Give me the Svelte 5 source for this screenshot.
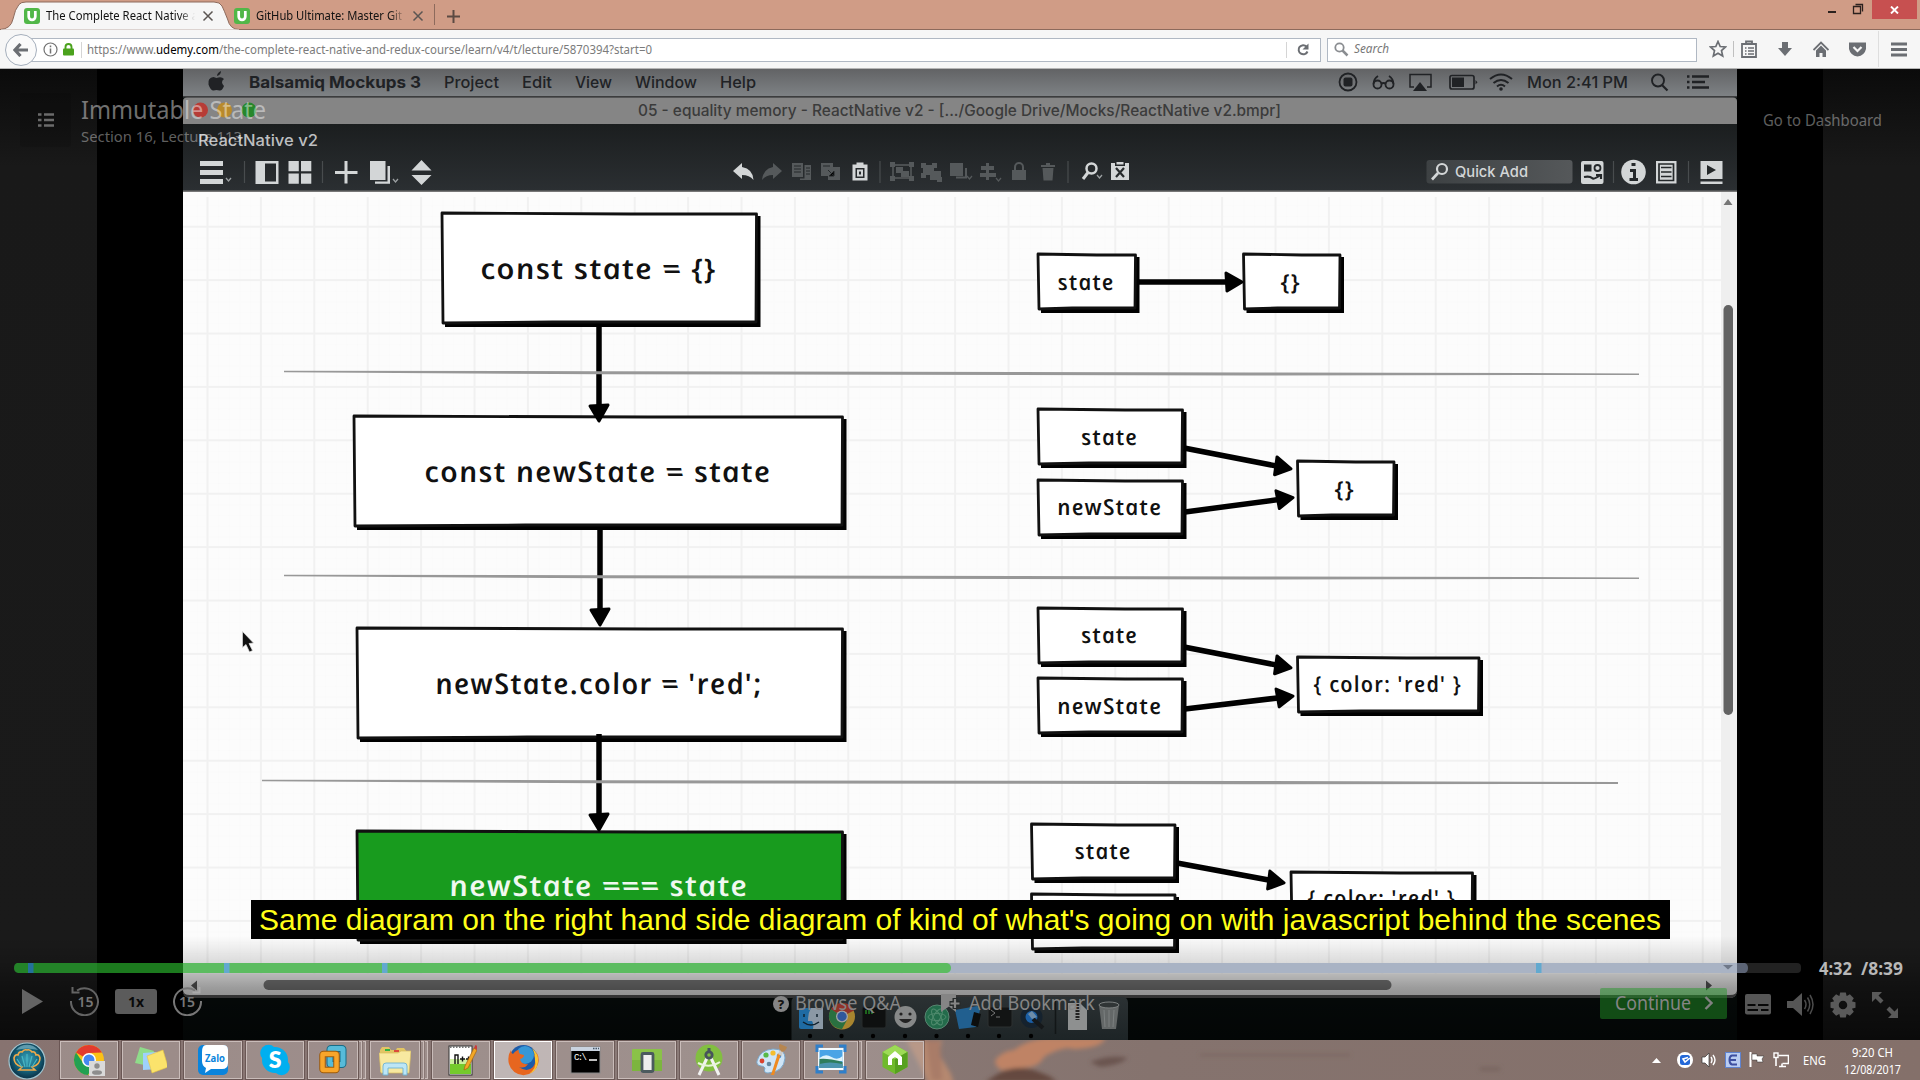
<script>
  const boxes = [
    { x: 442, y: 213, w: 315, h: 110, t: 'const state = {}', tx: 482, tw: 236, by: 279, big: true },
    { x: 354, y: 416, w: 489, h: 110, t: 'const newState = state', tx: 426, tw: 347, by: 481.5, big: true },
    { x: 357, y: 628, w: 486, h: 110, t: "newState.color = 'red';", tx: 437, tw: 327, by: 693.5, big: true },
    { x: 357, y: 831, w: 486, h: 109, t: 'newState === state', tx: 451, tw: 299, by: 896, big: true, green: true },
    { x: 1038, y: 254, w: 98, h: 55, t: 'state', tx: 1059, tw: 57, by: 289.5 },
    { x: 1243.5, y: 254, w: 97, h: 55, t: '{}', tx: 1282, tw: 20, by: 289.5 },
    { x: 1038, y: 409, w: 145, h: 55, t: 'state', tx: 1082.5, tw: 57, by: 445 },
    { x: 1038, y: 480, w: 145, h: 55, t: 'newState', tx: 1058.5, tw: 105, by: 515 },
    { x: 1297.5, y: 461, w: 97, h: 55, t: '{}', tx: 1336, tw: 20, by: 497 },
    { x: 1038, y: 608, w: 145, h: 55, t: 'state', tx: 1082.5, tw: 57, by: 643.3 },
    { x: 1038, y: 678, w: 145, h: 55, t: 'newState', tx: 1058.5, tw: 105, by: 714 },
    { x: 1297.5, y: 657, w: 182, h: 55, t: "{ color: 'red' }", tx: 1315, tw: 148, by: 691.5 },
    { x: 1031.5, y: 824, w: 144, h: 55, t: 'state', tx: 1076, tw: 57, by: 859.3 },
    { x: 1031.5, y: 894, w: 144, h: 55, t: '', tx: 1052, tw: 105, by: 930 },
    { x: 1291, y: 872, w: 182, h: 55, t: "{ color: 'red' }", tx: 1309, tw: 148, by: 906 }
  ];
  const arrows = [
    [599, 326, 599, 422], [600, 529, 600, 626], [599, 734, 599, 831],
    [1138, 282, 1243, 282],
    [1184, 448, 1292, 469], [1185, 512, 1294, 497.5],
    [1184, 647, 1292, 668], [1185, 709, 1294, 696],
    [1177, 863, 1285, 883]
  ];
  const heads = arrows.map(([x1, y1, x2, y2]) => ({
    x1, y1, x2, y2,
    a: (Math.atan2(y2 - y1, x2 - x1) * 180) / Math.PI,
    len: Math.hypot(x2 - x1, y2 - y1)
  }));
  const menus = [
    { t: 'Balsamiq Mockups 3', x: 249, w: 172, b: true },
    { t: 'Project', x: 444, w: 55 }, { t: 'Edit', x: 522, w: 30 },
    { t: 'View', x: 575, w: 37 }, { t: 'Window', x: 635, w: 62 },
    { t: 'Help', x: 720, w: 36 }, { t: 'Mon 2:41 PM', x: 1527, w: 101 }
  ];
  const dividers = [
    'M284 370.8 L600 371.2 L1250 372.4 L1639 373.4 L1639 375 L1250 375.4 L600 374.2 L284 372.3Z',
    'M284 574.8 L600 575.2 L1250 576.4 L1639 577.4 L1639 579 L1250 579.4 L600 578.2 L284 576.3Z',
    'M262 779.8 L600 780.2 L1250 781 L1618 782 L1618 784 L1250 784.2 L600 783.2 L262 781.3Z'
  ];
  const markers = [28, 224, 382, 1536];
  const tasks = [
    { k: 'chrome' }, { k: 'notes' }, { k: 'zalo' }, { k: 'skype' },
    { k: 'vm', stack: 2 }, { k: 'folder', stack: 2 }, { k: 'npp' },
    { k: 'firefox', active: true }, { k: 'cmd' }, { k: 'phone' },
    { k: 'studio' }, { k: 'paint' }, { k: 'photo', stack: 1 }, { k: 'nox' }
  ];
  const dockDots = [810, 841.5, 873, 905, 936.5, 968, 999, 1031];
</script>

{#snippet fit(text, w, size, cls)}
  <svg class="fit {cls}" width={w} height={Math.ceil(size * 1.4)}>
    <text y={size} font-size={size} textLength={w} lengthAdjust="spacingAndGlyphs">{text}</text>
  </svg>
{/snippet}

{#snippet favicon()}
  <svg class="favicon" width="16" height="16"><rect width="16" height="16" rx="3" fill="#51b748" /><path d="M4.700 3v5.600a3.300 3.300 0 0 0 6.600 0V3" fill="none" stroke="#fff" stroke-width="2.700" /></svg>
{/snippet}

{#snippet cross()}
  <svg class="cross" width="12" height="12"><path d="M1.500 1.500l9 9M10.500 1.500l-9 9" stroke="#5b5552" stroke-width="1.500" /></svg>
{/snippet}

{#snippet taskIcon(k)}
  <svg width="32" height="32" viewBox="0 0 32 32">
    {#if k === 'chrome'}
      <circle cx="16" cy="16" r="15" fill="#fbc116" />
      <path d="M16 16L3 8.500A15 15 0 0 1 29 8.500L16 9Z" fill="#e33b2e" />
      <path d="M3 8.500A15 15 0 0 0 15 31L21 20L16 16L9.800 18.500Z" fill="#22a052" />
      <circle cx="16" cy="16" r="7" fill="#fff" /><circle cx="16" cy="16" r="5.500" fill="#4688f1" />
      <rect x="16" y="17" width="16" height="15" fill="#d9d9d9" /><circle cx="24" cy="22" r="2.700" fill="#8d8d8d" /><ellipse cx="24" cy="28.500" rx="5" ry="2.300" fill="#8d8d8d" />
    {:else if k === 'notes'}
      <path d="M5 3l14 4-5 15L0 19Z" fill="#8fdc8a" /><path d="M8 9l14-1 2 17-16 1Z" fill="#9fd1fb" /><path d="M12 12l16-6 5 17-16 6Z" fill="#fbe36c" stroke="#e5c541" stroke-width=".6" />
    {:else if k === 'zalo'}
      <rect x="1" y="1" width="30" height="30" rx="5" fill="#0a84dc" /><path d="M9 1h17q5 0 5 5v13q0 6-6 6H14l-6 4 1-5q-4-2-4-7V8q0-7 4-7Z" fill="#fff" />
      <text x="8" y="17.500" font-size="10" font-weight="700" fill="#0a84dc" textLength="20" lengthAdjust="spacingAndGlyphs" font-family="Open Sans, sans-serif">Zalo</text>
    {:else if k === 'skype'}
      <circle cx="9.500" cy="9" r="8.300" fill="#00aff0" /><circle cx="22.500" cy="23" r="8.300" fill="#00aff0" /><circle cx="16" cy="16" r="13" fill="#00aff0" />
      <text x="16" y="24" font-size="23" font-weight="800" fill="#fff" text-anchor="middle" font-family="Lato, sans-serif">S</text>
    {:else if k === 'vm'}
      <rect x="13" y="4.500" width="13" height="16" rx="1" fill="none" stroke="#176c87" stroke-width="7" /><rect x="13" y="4.500" width="13" height="16" rx="1" fill="none" stroke="#57bbd9" stroke-width="5" />
      <rect x="5.500" y="10" width="14" height="16" rx="1" fill="none" stroke="#9d5b0c" stroke-width="6.500" /><rect x="5.500" y="10" width="14" height="16" rx="1" fill="none" stroke="#f8a52a" stroke-width="4.500" />
    {:else if k === 'folder'}
      <path d="M1 6l2-3h7l2 3h5l1-2h7l3 4v20H1Z" fill="#e2c564" /><path d="M6 5h5v2H6Z" fill="#2fb344" /><path d="M15 6h5v2h-5Z" fill="#db4b3c" /><path d="M20 8h6v2h-6Z" fill="#3c8fe0" />
      <path d="M0 9h19l3-2h10l-2 22H2Z" fill="#f8e9a0" stroke="#d9bd5e" stroke-width=".7" /><path d="M4 31v-9q0-3 3-3h18q3 0 3 3v9h-4v-7H9v7Z" fill="#bde6f6" stroke="#6db2d3" stroke-width=".9" />
    {:else if k === 'npp'}
      <rect x="4" y="2" width="23" height="29" fill="#fff" stroke="#333" stroke-width="1" /><path d="M5 19h21v11H5Z" fill="#74ca2c" /><path d="M5 15h21v5H5Z" fill="#cdf09f" />
      <path d="M5 3h21" stroke="#777" stroke-width="2" stroke-dasharray="1.500 1.500" />
      <path d="M10 20v-9h3v9M15 15h5M17.500 12.500v5M21 15h5M23.500 12.500v5" stroke="#111" fill="none" stroke-width="1.400" /><path d="M19 26l1-4 9-18 3 2-9 18Z" fill="#f2a826" stroke="#a76310" stroke-width=".7" /><path d="M29 4l1.500-3 3 1.500L32 6Z" fill="#c93c3c" />
    {:else if k === 'firefox'}
      <circle cx="16.500" cy="15" r="14" fill="#1e5ba8" /><circle cx="18" cy="11" r="9" fill="#3697d6" />
      <path d="M29 7q4 7 2 13a15 15 0 0 1-29 0Q0 12 4 6q0 3 2 4 3-4 6-4-1 2 1 4l4 1q0 3-4 4 1 6 8 5-3 5-9 3 8 6 14 0 4-5 1-12 4 2 2-4Z" fill="#e7661f" /><path d="M25 4q7 6 6 14-1 9-9 12 8-6 6-14 0-7-3-12Z" fill="#fcc430" />
    {:else if k === 'cmd'}
      <rect x="2" y="3" width="29" height="26" fill="#000" stroke="#888" stroke-width="1" /><rect x="2" y="3" width="29" height="4" fill="#c9d3e0" /><path d="M24 4.500h6" stroke="#456" stroke-width="1.500" stroke-dasharray="1.500 1" />
      <text x="5" y="16" font-size="9" fill="#fff" font-family="Liberation Mono, monospace" textLength="13">C:\</text><path d="M20 16h8" stroke="#fff" stroke-width="1.500" />
    {:else if k === 'phone'}
      <rect x="1" y="5" width="30" height="22" rx="1" fill="#8ac248" /><path d="M1 16h30v11H1Z" fill="#7cb53f" /><rect x="11" y="9.500" width="11" height="18" rx="1" fill="#eee" stroke="#4b5a5e" stroke-width="2.800" />
    {:else if k === 'studio'}
      <circle cx="16" cy="14" r="13.500" fill="#82bf40" /><path d="M14.500 13L6 31M17.500 13L26 31" stroke="#f2f2f2" stroke-width="3" /><path d="M5 19q11 6 22-1" stroke="#e8f5da" stroke-width="2" fill="none" /><circle cx="16" cy="11" r="3.200" fill="none" stroke="#47555b" stroke-width="2.800" /><path d="M16 4v4" stroke="#47555b" stroke-width="3" />
    {:else if k === 'paint'}
      <path d="M2 17Q5 6 18 5q12 0 12 9-1 14-17 15-5 0-3-5-1-2-4-2-5-1-4-5Z" fill="#cfe5f7" stroke="#7ba8cb" stroke-width="1" /><circle cx="11" cy="11" r="2.600" fill="#56b947" /><circle cx="18" cy="9" r="2.600" fill="#f5bd2e" /><circle cx="7" cy="17" r="2.400" fill="#d9432f" /><circle cx="24" cy="12" r="2.300" fill="#418cd7" /><circle cx="14" cy="20" r="2.300" fill="#6487a0" />
      <path d="M16 31l7-22 3 1-7 21Z" fill="#ef8b22" /><path d="M23 10l2-4 3 1-1 5Z" fill="#ccc" /><path d="M25 6q-2-5 0-6l7 3q-1 4-5 5Z" fill="#b78650" />
    {:else if k === 'photo'}
      <rect x="3" y="4" width="26" height="22" fill="#f4fafd" /><rect x="4.500" y="6" width="23" height="18" fill="#4aa4e6" /><path d="M4.500 14q6-5 12-1t11-1v5h-23Z" fill="#dff3fb" /><path d="M4.500 15q8-1 23 3v6h-23Z" fill="#2f7d5c" /><path d="M4.500 20q10-3 23 0v4h-23Z" fill="#4c95ae" />
      <path d="M2 8V2h6M24 2h6v6M30 22v6h-6M8 28H2v-6" fill="none" stroke="#2f7fca" stroke-width="3" />
    {:else}
      <path d="M16 1l12.500 7v15L16 30 3.500 23V8Z" fill="#6fba2c" /><path d="M16 1l12.500 7L16 15 3.500 8Z" fill="#9ddb56" /><path d="M16 15l12.500-7v15L16 30Z" fill="#56a11f" /><path d="M9 21v-8l7-6 7 6v8h-4v-6l-3-2-3 2v6Z" fill="#fff" />
    {/if}
  </svg>
{/snippet}

<div class="screen">
  <header class="tabs">
    <div class="tab active">
      <svg class="shape" width="241" height="30" viewBox="0 0 241 30"><path d="M0 29.500Q11 29 13 19T19 4.500Q21 2 26 2H214Q220 2 222 6T227.500 19Q230 29.500 239 29.500" fill="#f6f6f6" stroke="#8d6a5c" stroke-width="1" /><path d="M1 30H239" stroke="#f6f6f6" stroke-width="1" /></svg>
      {@render favicon()}
      <span class="tab-text">{@render fit('The Complete React Native a', 152, 12, 'dark')}</span>
      {@render cross()}
    </div>
    <div class="tab second">
      {@render favicon()}
      <span class="tab-text">{@render fit('GitHub Ultimate: Master Git', 146, 12, 'dark')}</span>
      {@render cross()}
    </div>
    <svg class="plus" width="13" height="13"><path d="M6.500 0v13M0 6.500h13" stroke="#5c4a43" stroke-width="2" /></svg>
    <div class="win">
      <svg width="44" height="19"><path d="M0 12h8" stroke="#2b211e" stroke-width="2" /><path d="M25.500 6.500h7v7h-7zM25 6.500h8M27.500 4.500h7v7" fill="none" stroke="#2b211e" stroke-width="1.300" /></svg>
      <span class="close"><svg width="9" height="8"><path d="M1 .5l7 7M8 .5l-7 7" stroke="#fff" stroke-width="1.900" /></svg></span>
    </div>
  </header>

  <nav class="nav">
    <div class="url">
      <span class="back"><svg width="16" height="14"><path d="M7.500 1L2 7l5.500 6M2.500 7H15" fill="none" stroke="#6b6e73" stroke-width="3.200" /></svg></span>
      <svg class="info" width="15" height="15"><circle cx="7.500" cy="7.500" r="6.500" fill="none" stroke="#727272" stroke-width="1.200" /><path d="M7.500 6.500v5M7.500 3.500v1.700" stroke="#727272" stroke-width="1.500" /></svg>
      <svg class="lock" width="11" height="13"><rect y="5.500" width="11" height="7" rx="1" fill="#4ba21d" /><path d="M2.500 6V4a3 3 0 0 1 6 0v2" fill="none" stroke="#4ba21d" stroke-width="1.900" /></svg>
      <i class="bar"></i>
      <svg class="fit address" width="567" height="17"><text y="12.500" font-size="12" textLength="565" lengthAdjust="spacingAndGlyphs">https://www.<tspan class="host">udemy.com</tspan>/the-complete-react-native-and-redux-course/learn/v4/t/lecture/5870394?start=0</text></svg>
      <i class="bar end"></i>
      <svg class="reload" width="14" height="14"><path d="M11.500 8.500A4.600 4.600 0 1 1 10.500 3.500" fill="none" stroke="#6b6e73" stroke-width="2" /><path d="M12.500 0.500v6h-6z" fill="#6b6e73" /></svg>
    </div>
    <div class="search">
      <svg width="15" height="15"><circle cx="5.500" cy="5.500" r="4.200" fill="none" stroke="#8a8d91" stroke-width="1.800" /><path d="M8.500 8.500l5 5" stroke="#8a8d91" stroke-width="2.500" /></svg>
      {@render fit('Search', 35, 12, 'italic')}
    </div>
    <div class="tools">
      <svg width="18" height="18" viewBox="0 0 18 18"><path d="M9 1.500l2.200 5 5.300.5-4 3.600 1.200 5.400L9 13.200 4.300 16l1.200-5.400-4-3.600 5.300-.5Z" fill="none" stroke="#6b6e73" stroke-width="1.700" /></svg>
      <i class="bar"></i>
      <svg width="16" height="18" viewBox="0 0 16 18"><path d="M1 4h14v13H1zM5 4V1.500h6V4" fill="none" stroke="#6b6e73" stroke-width="1.800" /><path d="M4 8h1.500M7 8h6M4 11h1.500M7 11h6M4 14h1.500M7 14h6" stroke="#6b6e73" stroke-width="1.400" /></svg>
      <svg width="14" height="16" viewBox="0 0 14 16"><path d="M4 1h6v6h4l-7 8-7-8h4Z" fill="#6b6e73" /></svg>
      <svg width="16" height="16" viewBox="0 0 16 16"><path d="M.5 9L8 1.500 15.500 9" fill="none" stroke="#6b6e73" stroke-width="1.800" /><path d="M3 9.500l5-5 5 5V16H9.500v-4h-3v4H3Z" fill="#6b6e73" /></svg>
      <svg width="17" height="16" viewBox="0 0 17 16"><path d="M0 1.500h17V8Q15.500 14.500 8.500 15.500 1.500 14.500 0 8Z" fill="#6b6e73" /><path d="M4.500 6l4 4 4-4" fill="none" stroke="#f6f6f6" stroke-width="2.200" /></svg>
      <i class="bar tall"></i>
      <svg width="16" height="15"><path d="M0 2h16M0 7.500h16M0 13h16" stroke="#6b6e73" stroke-width="3" /></svg>
    </div>
  </nav>

  <main class="player">
    <svg class="video" width="1920" height="971" viewBox="0 69 1920 971">
      <defs>
        <linearGradient id="side" x2="0" y2="1"><stop offset="0" stop-color="#0b0b0b" /><stop offset=".1" stop-color="#191919" /><stop offset=".9" stop-color="#1a1a1a" /><stop offset="1" stop-color="#1a1a1a" /></linearGradient>
        <linearGradient id="menu" x2="0" y2="1"><stop offset="0" stop-color="#626365" /><stop offset="1" stop-color="#7f8386" /></linearGradient>
        <linearGradient id="tool" x2="0" y2="1"><stop offset="0" stop-color="#1b1e1f" /><stop offset="1" stop-color="#2b2f32" /></linearGradient>
        <linearGradient id="shade" x2="0" y2="1"><stop offset="0" stop-color="#000" stop-opacity="0" /><stop offset=".25" stop-color="#000" stop-opacity=".13" /><stop offset=".5" stop-color="#000" stop-opacity=".35" /><stop offset="1" stop-color="#000" stop-opacity=".62" /></linearGradient>
        <linearGradient id="dock" x2="0" y2="1"><stop offset="0" stop-color="#2b3133" /><stop offset="1" stop-color="#1d2426" /></linearGradient>
        <linearGradient id="field" x2="1" y2="0"><stop offset="0" stop-color="#3d4143" /><stop offset="1" stop-color="#55585a" /></linearGradient>
        <pattern id="minor" x="207.500" y="226.700" width="10.680" height="10.680" patternUnits="userSpaceOnUse"><path d="M0 0H10.680M0 0V10.680" stroke="#f9f9f9" /></pattern>
        <pattern id="major" x="206.500" y="225.700" width="53.400" height="53.400" patternUnits="userSpaceOnUse"><path d="M0 1H53.400M1 0V53.400" stroke="#f1f1f1" stroke-width="2" /></pattern>
      </defs>
      <rect y="69" width="1920" height="971" fill="#000" />
      <rect y="69" width="97" height="971" fill="url(#side)" /><rect x="1823" y="69" width="97" height="971" fill="url(#side)" />
      <rect x="183" y="69" width="1554" height="971" fill="#080f0e" />

      <!-- system menu bar -->
      <rect x="183" y="69" width="1554" height="28" fill="url(#menu)" />
      <rect x="183" y="96" width="1554" height="1.500" fill="#3c3d3e" />
      <g fill="#202225" font-family="Inter, sans-serif" font-size="16">
        <path d="M217 76q0-3 4-5 0 4-4 5ZM216.500 78q5-2 7.500 1-4 3 0 7-2 5-4.500 4.500-3-1-6 0-3 0-5-6-1-7 5-7.500Z" />
        {#each menus as m}
          <text x={m.x} y="88" font-weight={m.b ? 700 : 500} textLength={m.w} lengthAdjust="spacingAndGlyphs">{m.t}</text>
        {/each}
        <circle cx="1348" cy="82" r="8.500" fill="none" stroke="#202225" stroke-width="1.800" /><rect x="1343.500" y="77.500" width="9" height="9" rx="2" />
        <path d="M1373.500 84q0-5 4.500-8M1393.500 84q0-5-4.500-8M1381 84q2.500-2 5 0" stroke="#202225" stroke-width="1.700" fill="none" />
        <circle cx="1377.500" cy="84.500" r="4" fill="none" stroke="#202225" stroke-width="1.800" /><circle cx="1389.500" cy="84.500" r="4" fill="none" stroke="#202225" stroke-width="1.800" />
        <path d="M1414 87h-4V74.500h21V87h-4" fill="none" stroke="#202225" stroke-width="1.500" /><path d="M1420 82l7 9h-14Z" />
        <rect x="1450" y="75.500" width="24" height="13.500" rx="2" fill="none" stroke="#202225" stroke-width="1.700" /><rect x="1452" y="77.500" width="12" height="9.500" /><path d="M1475.500 80v4.500l2-2.200Z" />
        <g fill="none" stroke="#202225" stroke-width="2"><path d="M1490 79q11-9 22 0M1493.500 83q7.500-6 15 0M1497 86.500q4-3.500 8 0" /></g><circle cx="1501" cy="89" r="1.800" />
        <circle cx="1658" cy="80.500" r="6" fill="none" stroke="#202225" stroke-width="1.900" /><path d="M1662 85l5.500 5.500" stroke="#202225" stroke-width="2.200" />
        <path d="M1687 76.500h2.500M1692 76.500h17M1687 82h2.500M1692 82h13M1687 87.500h2.500M1692 87.500h17" stroke="#202225" stroke-width="2.400" />
      </g>

      <!-- window title and toolbar -->
      <path d="M183 124V101q0-3.500 4-3.500H1733q4 0 4 3.500V124Z" fill="#858585" />
      <circle cx="200.500" cy="110" r="7.500" fill="#b73c36" /><circle cx="224.500" cy="110" r="7.500" fill="#b98a2b" /><circle cx="249" cy="110" r="7.500" fill="#27872c" />
      <text x="638" y="116" font-size="15.500" font-family="Inter, sans-serif" font-weight="500" fill="#3b3b3b" textLength="643" lengthAdjust="spacingAndGlyphs">05 - equality memory - ReactNative v2 - [.../Google Drive/Mocks/ReactNative v2.bmpr]</text>
      <rect x="183" y="124" width="1554" height="67" fill="url(#tool)" />
      <text x="198" y="146" font-size="16" font-family="Inter, sans-serif" font-weight="500" fill="#bdbfc0" textLength="120" lengthAdjust="spacingAndGlyphs">ReactNative v2</text>
      <g stroke="#484c4e" stroke-width="1.200"><path d="M244.500 161v22M322.500 161v22M880 161v22M1068 161v22M1613.500 161v22M1688.500 161v22" /></g>
      <g fill="#d3d6d7">
        <path d="M200 161h23v5h-23zM200 170h23v5h-23zM200 179h23v5h-23z" />
        <path fill-rule="evenodd" d="M255.500 161h23v23h-23zM265 163.500v18h11v-18z" />
        <path d="M288.500 161h10.300v10.300h-10.300zM301 161h10.300v10.300h-10.300zM288.500 173.500h10.300v10.300h-10.300zM301 173.500h10.300v10.300h-10.300z" />
        <path d="M344.500 161h3v22.500h-3zM335 171h22.500v3h-22.500z" /><path d="M370 161h15.500v19H370zM387.500 166h2.500v17.800h-15v-2.300h12.500z" />
        <path d="M421.500 160l10 10.500h-20ZM421.500 185l10-10h-20Z" />
        <path d="M733 171l9-8v4q11 2 11.500 13-4-5-11.500-5v4Z" />
        <path fill-rule="evenodd" d="M852.500 164.500h4v-2h7v2h4v16h-15zM855.500 168v10h9v-10z" /><path fill-rule="evenodd" d="M857 169.500h6v7h-6zM859 171.500h2v3h-2z" />
        <path d="M1111 163h4v3h10v-3h4v17h-18ZM1116.500 162h7v2.500h-7z" />
      </g>
      <g fill="none" stroke="#d3d6d7"><circle cx="1091.500" cy="168.500" r="5" stroke-width="2.500" /><path d="M1088 172.500l-5 6.500" stroke-width="3" /><path d="M226 178l2.500 3 2.500-3M393 179l2.500 3 2.500-3M1097 175l2.500 3 2.500-3" stroke="#9b9fa1" stroke-width="1.300" /></g>
      <path d="M1116 168l8 9M1124 168l-8 9" stroke="#262a2c" stroke-width="2.200" />
      <g fill="#55595b">
        <path d="M782 171l-9-8v4q-10 2-11 13 4-5 11-5v4Z" />
        <path d="M792 163h11v14h-11zM804.500 165h6.500v15h-11v-1.500h4.500z" /><path d="M821 163h12v4h7v13h-12v-4h-7z" />
        <path d="M950 163h13v13h-13zM965 168h2v10.500h-11v-2h9z" />
        <path d="M986 163h3v17h-3zM981 166h13v4h-13zM980 173h16v4h-16z" />
        <path d="M1012 170h14v10h-14zM1042.500 168h11l-1 12.500h-9zM1041 165h14v2h-14zM1046 163h4v2h-4z" />
        <path d="M921 163h5v5h-5zM932 163h5v5h-5zM921 173h5v5h-5zM937 177h5v5h-5zM923 165h11v10h-11zM930 171h11v9h-11z" />
        <path d="M890 162h5v5h-5zM909 162h5v5h-5zM890 176h5v5h-5zM909 176h5v5h-5zM896 167h7v6h-7zM901 171h8v6h-8z" />
      </g>
      <g fill="none" stroke="#55595b" stroke-width="1.600"><rect x="893" y="165" width="18" height="13" /><path d="M1015 170v-3a4 4 0 0 1 8 0v3" stroke-width="2" /><path d="M967 176l2.500 3 2.500-3M996 178l2.500 3 2.500-3" stroke-width="1.200" /></g>
      <path d="M794 166h7M794 169h7M794 172h7M806 168h4M806 171h4M806 174h4M823 166h7M828 170l6 6M834 171v5h-5" stroke="#25292b" stroke-width="1" />
      <rect x="1426.500" y="160" width="146" height="23.500" rx="3" fill="url(#field)" />
      <g fill="none" stroke="#d3d6d7"><circle cx="1442" cy="169" r="5" stroke-width="2.200" /><path d="M1438 173l-6 6.500" stroke-width="2.600" /></g>
      <text x="1455" y="176.500" font-size="15" font-weight="500" font-family="Inter, sans-serif" fill="#d3d6d7" textLength="73" lengthAdjust="spacingAndGlyphs">Quick Add</text>
      <rect x="1581" y="161" width="22.500" height="23" rx="2" fill="#d3d6d7" /><rect x="1584" y="164.500" width="7.500" height="7" fill="#24282a" /><circle cx="1597.500" cy="168" r="3" fill="none" stroke="#24282a" stroke-width="1.800" /><path d="M1584 177q6-1 8 1t8-3M1596 175h5v4" fill="none" stroke="#24282a" stroke-width="2.200" />
      <circle cx="1633.500" cy="172" r="12.300" fill="#d3d6d7" /><path d="M1631.500 164.500h4M1630 170.500h4.500v9M1629.500 179.500h8.500" stroke="#24282a" stroke-width="3" fill="none" />
      <rect x="1656" y="161" width="20.500" height="22.500" fill="#d3d6d7" /><path d="M1659 164h14.500v16.500h-14.500zM1661 167.500h10.500M1661 172h10.500M1661 176.500h10.500" fill="none" stroke="#24282a" stroke-width="1.700" />
      <path d="M1700.500 161h22v18h-22zM1700.500 181.500h22v2.500h-22z" fill="#d3d6d7" /><path d="M1707 165l9 5-9 5Z" fill="#24282a" />

      <!-- drawing canvas -->
      <rect x="183" y="190.500" width="1554" height="1.500" fill="#777" />
      <path d="M183 192H1737V990q0 7-7 8H190q-7-1-7-8Z" fill="#fcfcfc" />
      <rect x="183" y="197" width="1538" height="779" fill="url(#minor)" /><rect x="183" y="197" width="1538" height="779" fill="url(#major)" />
      <path d="M1721 192H1737V990q0 6-6 6H190q-7 0-7-6V974H1721Z" fill="#efefef" />
      <path d="M183 990q0 5 7 5H1730q7 0 7-5v3q-2 5-7 5H190q-5 0-7-5Z" fill="#555" />
      <path d="M1728 199l4.500 6h-9ZM1728 969l4-4.500h-9Z" fill="#767676" /><rect x="1723.500" y="305" width="9.500" height="410" rx="4.700" fill="#626262" />
      <path d="M191 985.500l6-5v10Z M1712 985.500l-6-5v10Z" fill="#555" /><rect x="263.500" y="980" width="1128" height="10" rx="5" fill="#777" />

      {#each boxes as b}
        <path d="M{b.x + 3} {b.y + b.h}V{b.y + 3}H{b.x + b.w + 3.5}V{b.y + b.h + 4}H{b.x + 3}Z" fill="#000" />
        <path d="M{b.x} {b.y}L{b.x + b.w * 0.6} {b.y + 1}L{b.x + b.w - 0.5} {b.y + 1}L{b.x + b.w - 1} {b.y + b.h - 1}L{b.x + b.w * 0.35} {b.y + b.h - 1}L{b.x + 1} {b.y + b.h}Z" fill={b.green ? '#189b1e' : '#fff'} stroke="#111" stroke-width="2.800" stroke-linejoin="round" />
        {#if b.t}
          <g transform="translate({b.tx} {b.by}) skewX(12)">
            <text class="hand" class:light={b.green} font-size={b.big ? 28.5 : 22} textLength={b.tw} lengthAdjust="spacingAndGlyphs">{b.t}</text>
          </g>
        {/if}
      {/each}
      {#each heads as h}
        <g transform="translate({h.x1} {h.y1}) rotate({h.a})">
          <path d="M0 0H{h.len - 12}" stroke="#000" stroke-width="5.500" /><path d="M{h.len - 1} 0L{h.len - 16} 9L{h.len - 17} -9Z" fill="#000" stroke="#000" stroke-width="3" stroke-linejoin="round" />
        </g>
      {/each}
      {#each dividers as d}<path {d} fill="#989898" />{/each}
      <path d="M242.500 631.500v16l3.500-3 3.500 7.500 3-1.500-3.500-7 4.500-.5Z" fill="#111" stroke="#ddd" stroke-width=".7" />
      <rect y="936" width="1920" height="104" fill="url(#shade)" />

      <!-- dock -->
      <path d="M791.500 1040V1002q0-5 5-5H1122q6 0 6 6V1040Z" fill="url(#dock)" />
      <rect x="799" y="1008" width="24" height="21" rx="2" fill="#1f6ba3" /><path d="M811 1008h12v21h-10q1-5-1-8h-4q0-8 3-13Z" fill="#8b98a5" /><path d="M804 1014v3M817 1014v3M803 1022q8 6 16 0" stroke="#10202c" fill="none" stroke-width="1.500" />
      <circle cx="842" cy="1016.500" r="13" fill="#a8852f" /><path d="M842 1016.500l-11-7a13 13 0 0 1 23 1Z" fill="#913229" /><path d="M831 1009a13 13 0 0 0 11 20l5-9Z" fill="#2a7040" /><circle cx="842" cy="1016.500" r="6" fill="#a5a5a5" /><circle cx="842" cy="1016.500" r="4.700" fill="#31589b" />
      <rect x="862" y="1007" width="24" height="21" rx="2" fill="#0e1010" stroke="#262a2b" /><path d="M865 1012h8" stroke="#1d651d" stroke-width="4" stroke-dasharray="2 1" />
      <circle cx="905.500" cy="1017" r="11" fill="#868888" /><circle cx="901" cy="1014" r="1.600" fill="#222" /><circle cx="910" cy="1014" r="1.600" fill="#222" /><path d="M899 1019q6.500 8 13 0Z" fill="#222" />
      <circle cx="937" cy="1017" r="12" fill="#236b4b" stroke="#588571" /><g fill="none" stroke="#4f8a6d"><ellipse cx="937" cy="1017" rx="9" ry="3.500" /><ellipse cx="937" cy="1017" rx="9" ry="3.500" transform="rotate(60 937 1017)" /><ellipse cx="937" cy="1017" rx="9" ry="3.500" transform="rotate(120 937 1017)" /></g>
      <path d="M955 1010l22-4 3 4-4 17-17 2Z" fill="#215f8f" /><path d="M974 1012l7 2-3 13-7-2Z" fill="#0c0e0e" />
      <rect x="988" y="1007" width="24" height="20" rx="2" fill="#121414" stroke="#2c3031" /><path d="M991 1010l4 3-4 3M996 1017h4" stroke="#777" fill="none" />
      <circle cx="1031.500" cy="1017" r="8.500" fill="#1c5fa4" stroke="#15222e" stroke-width="5" /><path d="M1033 1019l10 9" stroke="#15181a" stroke-width="4" /><path d="M1028 1014l4-3 5 6-5 2Z" fill="#6d8ca8" />
      <path d="M1055.500 1000v34" stroke="#121617" stroke-width="1.500" />
      <path d="M1068 1003h12l7 7v20h-19Z" fill="#8e9090" /><path d="M1077.500 1004v16" stroke="#222" stroke-width="4" stroke-dasharray="2 1" />
      <path d="M1099 1005h20l-3 24h-14Z" fill="#646868" /><ellipse cx="1109" cy="1005" rx="10" ry="3" fill="#303536" stroke="#7d8181" /><path d="M1104 1010l1 17M1109 1010v17M1114 1010l-1 17" stroke="#7c8080" />
      {#each dockDots as x}<circle cx={x} cy="1036" r="2.200" fill="#000" />{/each}
    </svg>

    <div class="overlay">
      <div class="top">
        <span class="list"><svg width="16" height="16"><path d="M0 2.500h3.500M6 2.500h10M0 8h3.500M6 8h10M0 13.500h3.500M6 13.500h10" stroke="#6b6b6b" stroke-width="2.400" /></svg></span>
        <div class="titles">
          {@render fit('Immutable State', 185, 25, 'ghost')}
          {@render fit('Section 16, Lecture 113', 161, 15, 'ghost dim')}
        </div>
        {@render fit('Go to Dashboard', 119, 15.5, 'ghost dim dash')}
      </div>

      <div class="caption"><svg class="sub" width="1402" height="38"><text y="30" font-size="29" textLength="1402" lengthAdjust="spacingAndGlyphs">Same diagram on the right hand side diagram of kind of what's going on with javascript behind the scenes</text></svg></div>

      <div class="timeline">
        <svg width="1787" height="10" viewBox="14 0 1787 10">
          <rect x="14" width="1787" height="10" rx="4" fill="#222" />
          <path d="M940 0H1737V10H940Z" fill="#a9b3c4" /><path d="M1737 0h8q3 1 3 5t-3 5h-8z" fill="#5c6475" />
          <path d="M183 0H947q4 1 4 5t-4 5H183Z" fill="#5cbc60" /><path d="M97 0h86v10h-86z" fill="#1c7a1e" /><path d="M17 0H97v10H18q-4-1-4-5 0-4 3-5Z" fill="#238328" />
          {#each markers as x, i}<rect {x} width="5.500" height="10" fill={i ? '#62a9cf' : '#24719b'} />{/each}
          <path d="M1723 2h10l-5 4.500Z" fill="#6f7888" />
        </svg>
        {@render fit('4:32', 33, 17, 'time')}
        {@render fit('/8:39', 42, 17, 'time')}
      </div>

      <div class="controls">
        <svg class="play" width="21" height="25"><path d="M0 0l21 12.500L0 25Z" fill="#646464" /></svg>
        <svg class="skip" width="32" height="30" viewBox="0 0 32 30"><path d="M8 4.500A13.500 13.500 0 1 1 2 15" fill="none" stroke="#646464" stroke-width="2" /><path d="M3.500 1v5.500h7" fill="none" stroke="#646464" stroke-width="2" /><text x="16.500" y="20.500" font-size="14" text-anchor="middle" class="num">15</text></svg>
        <span class="rate">1x</span>
        <svg class="skip next" width="32" height="30" viewBox="0 0 32 30"><path d="M24 4.500A13.500 13.500 0 1 0 30 15" fill="none" stroke="#777" stroke-width="2" /><path d="M28.500 1v5.500h-7" fill="none" stroke="#aaa" stroke-width="2" /><text x="16" y="20.500" font-size="14" text-anchor="middle" class="num">15</text></svg>
        <div class="mid">
          <svg width="16" height="16"><circle cx="8" cy="8" r="8" fill="#858585" /><text x="8" y="12.500" text-anchor="middle" font-size="13" font-weight="800" fill="#151515">?</text></svg>
          {@render fit('Browse Q&A', 106, 19, 'ghost2')}
        </div>
        <div class="mid book">
          <svg width="20" height="19"><path d="M0 0h15v18l-7-5.500L0 18Z" fill="#858585" /><path d="M14 4v11M8.500 9.500h11" stroke="#262a2a" stroke-width="5" /><path d="M14 5v9M9.500 9.500h9" stroke="#858585" stroke-width="2.200" /></svg>
          {@render fit('Add Bookmark', 126, 19, 'ghost2')}
        </div>
        <div class="continue">
          {@render fit('Continue', 76, 19, 'ghost2')}
          <svg width="9" height="14"><path d="M1.500 1l6 6-6 6" fill="none" stroke="#818181" stroke-width="2.400" /></svg>
        </div>
        <div class="right">
          <svg width="26" height="21"><rect width="26" height="20.500" rx="2" fill="#565656" /><path d="M2.500 11h8M13 11h10.500M2.500 16h10.500M16 16h7.500" stroke="#070707" stroke-width="2" /></svg>
          <svg width="27" height="24"><path d="M0 8h6l9-8v23l-9-8H0Z" fill="#565656" /><path d="M17.500 7q3 4.500 0 9M20.500 4.500q4.500 7 0 14M23 2q6 9.500 0 19" fill="none" stroke="#4c4c4c" stroke-width="1.500" /></svg>
          <svg width="26" height="26" viewBox="-13 -13 26 26"><circle r="7" fill="none" stroke="#5a5a5a" stroke-width="5.500" /><g fill="#5a5a5a">{#each [0, 45, 90, 135, 180, 225, 270, 315] as a}<path d="M-2.800 -12.500h5.600l1.200 5h-8z" transform="rotate({a})" />{/each}</g></svg>
          <svg width="26" height="26"><path d="M0 0h10l-3.500 3.500 5 5-3 3-5-5L0 10ZM26 26h-10l3.500-3.500-5-5 3-3 5 5L26 16Z" fill="#5a5a5a" /></svg>
        </div>
      </div>
    </div>
  </main>

  <footer class="taskbar">
    <svg class="wall" width="1920" height="40" viewBox="0 0 1920 40">
      <defs>
        <linearGradient id="sand"><stop offset="0" stop-color="#877370" /><stop offset=".35" stop-color="#8b7b78" /><stop offset=".6" stop-color="#85736e" /><stop offset="1" stop-color="#84706a" /></linearGradient>
        <filter id="soft" x="-20%" y="-50%" width="140%" height="200%"><feGaussianBlur stdDeviation="2" /></filter>
      </defs>
      <rect width="1920" height="40" fill="url(#sand)" />
      <g filter="url(#soft)">
        <path d="M906 0h36l-3 14 12 20 3 10h-26q-10-24-22-44Z" fill="#b58870" /><path d="M926 0h14l2 40h-10Z" fill="#a97c68" />
        <path d="M1001 30q-10-8-3-13 6-6 16-7Q1027 0 1046-2h60q-4 8-20 10-12 2-18 0-14 2-24 9-4 8-14 10Z" fill="#bf8365" />
        <path d="M1001 32q20-8 38 0 12 4 18 10h-72Z" fill="#65493f" /><path d="M1090 22q20-8 38-4-10 8-28 9Z" fill="#6b5550" /><path d="M1200 14h150v2h-150zM1480 27h20v4h-20z" fill="#78655f" />
      </g>
    </svg>
    <svg class="orb" width="38" height="38" viewBox="0 0 38 38"><defs><radialGradient id="orb" cy=".45"><stop offset="0" stop-color="#3aa0b8" /><stop offset=".65" stop-color="#15647c" /><stop offset="1" stop-color="#0c3a50" /></radialGradient></defs><circle cx="19" cy="19" r="18" fill="url(#orb)" stroke="#9fc4cf" stroke-width="1.200" /><path d="M8 8a14 14 0 0 1 22 0q-11-3-22 0Z" fill="#8fc5d3" opacity=".6" /><path d="M14 25q-8-2-8-9 1-4 4-3 1-4 4-3 2-3 5-2 3-1 5 2 3-1 4 3 3-1 4 3 0 7-8 9l3 3H11Z" fill="none" stroke="#f0a94a" stroke-width="1.600" /><path d="M14 25L9 17M17 25l-3-11M19 25V12M21 25l3-11M24 25l5-8" stroke="#48b6c4" stroke-width="1.200" /></svg>
    {#each tasks as t}
      <div class="task" class:on={t.active}>
        <div class="face">{@render taskIcon(t.k)}</div>
        {#each Array(t.stack ?? 0) as _}<i></i>{/each}
      </div>
    {/each}
    <div class="tray">
      <svg width="9" height="5"><path d="M4.500 0L9 5H0Z" fill="#fff" /></svg>
      <svg width="16" height="16"><circle cx="8" cy="8" r="8" fill="#fff" /><rect x="3" y="3" width="10" height="10" rx="2.500" fill="#2468d8" /><path d="M11 5.500L6 7l2 3 5-4" fill="none" stroke="#fff" stroke-width="1.600" /></svg>
      <svg width="16" height="16"><path d="M1 5h3l4-4v14l-4-4H1Z" fill="#fff" stroke="#333" stroke-width=".7" /><path d="M10 5q2 3 0 6M12 3q4 5 0 10" stroke="#fff" fill="none" stroke-width="1.400" /></svg>
      <svg width="16" height="16"><rect width="16" height="16" fill="#5f83cf" /><rect x="1" y="1" width="14" height="14" fill="#b9cdf2" /><path d="M12 3.500H7Q4.500 4 4.500 8T7 12.500h5M5 8h6" fill="none" stroke="#3d4fa0" stroke-width="2" /></svg>
      <svg width="16" height="16"><path d="M1.500 0v15" stroke="#fff" stroke-width="2" /><path d="M3 2h5v2h7l-2 3 1 3H8V8H3Z" fill="#fff" stroke="#333" stroke-width=".5" /></svg>
      <svg width="16" height="16"><path d="M5.500 3.500h10v8h-6M9 11.500v3M6 14.500h7M3 5v9" fill="none" stroke="#fff" stroke-width="1.600" /><rect x="1" y="1" width="4" height="4.500" fill="none" stroke="#fff" stroke-width="1.400" /></svg>
      {@render fit('ENG', 23, 12, 'white eng')}
      <div class="clock">
        {@render fit('9:20 CH', 41, 12, 'white')}
        {@render fit('12/08/2017', 57, 12, 'white')}
      </div>
    </div>
  </footer>
</div>

<style>
  :global(body) { margin: 0; overflow: hidden; background: #000; }
  .screen { width: 1920px; height: 1080px; display: flex; flex-direction: column; font-family: "Noto Sans", "Open Sans", sans-serif; overflow: hidden; }
  svg { display: block; flex: none; }
  .fit { overflow: visible; }
  .dark { fill: #111; }
  .italic { fill: #777; font-style: italic; }
  .white { fill: #fff; }

  .tabs { height: 30px; box-sizing: border-box; flex: none; display: flex; align-items: center; background: #d09c86; border-bottom: 1px solid #8d6a5c; position: relative; }
  .tab { display: flex; align-items: center; height: 30px; margin-top: 3px; position: relative; box-sizing: border-box; }
  .active { width: 234px; padding-left: 24px; }
  .shape { position: absolute; left: 0; top: -1px; }
  .favicon { position: relative; }
  .tab-text { margin-left: 6px; width: 152px; height: 17px; position: relative; -webkit-mask-image: linear-gradient(90deg, #000 88%, transparent 98%); mask-image: linear-gradient(90deg, #000 88%, transparent 98%); }
  .cross { position: relative; margin-left: 4px; }
  .second { width: 201px; }
  .second::after { content: ""; position: absolute; right: 0; top: 3px; height: 21px; width: 1px; background: #8d6a5c; }
  .plus { margin: 3px 0 0 12px; }
  .win { margin-left: auto; align-self: flex-start; display: flex; padding-right: 3px; }
  .close { width: 45px; height: 19px; background: #c75050; display: flex; align-items: center; justify-content: center; }

  .nav { height: 39px; box-sizing: border-box; flex: none; background: #f6f6f6; border-bottom: 1px solid #b5b5b5; display: flex; align-items: center; padding: 0 13px 0 5px; }
  .url { display: flex; align-items: center; width: 1291px; height: 24px; box-sizing: border-box; border: 1px solid #b0b8c3; background: #fff; margin-left: 25px; }
  .back { width: 32px; height: 32px; box-sizing: border-box; border: 1px solid #a5afbc; border-radius: 50%; background: #fafafa; margin-left: -26px; display: flex; align-items: center; justify-content: center; flex: none; }
  .info { margin-left: 6px; }
  .lock { margin-left: 5px; }
  .bar { width: 1px; height: 16px; background: #d5d5d5; flex: none; }
  .url .bar { margin-left: 7px; }
  .address { margin-left: 5px; fill: #7b7b7b; }
  .host { fill: #000; }
  .url .bar.end { margin-left: auto; height: 16px; }
  .reload { margin: 0 10px 0 9px; }
  .search { display: flex; align-items: center; gap: 5px; width: 370px; height: 24px; box-sizing: border-box; border: 1px solid #b0b8c3; background: #fff; margin-left: 6px; padding-left: 6px; }
  .url, .search { margin-top: 1px; }
  .tools { margin-left: auto; display: flex; align-items: center; }
  .tools svg:nth-of-type(2) { margin-left: 7px; }
  .tools svg:nth-of-type(3) { margin-left: 21px; }
  .tools svg:nth-of-type(4) { margin-left: 21px; }
  .tools svg:nth-of-type(5) { margin-left: 20px; }
  .tools .bar { margin-left: 6px; background: #c0c0c0; }
  .tools .bar.tall { height: 36px; margin: 0 12px; background: #dedede; }

  .player { position: relative; height: 971px; flex: none; }
  .hand { font-family: "Open Sans", sans-serif; font-style: italic; font-weight: 600; letter-spacing: 1.2px; fill: #111; }
  .hand.light { fill: #f0f8f0; }
  .overlay { position: absolute; inset: 0; display: flex; flex-direction: column; }
  .top { display: flex; align-items: flex-start; padding: 24px 38px 0 20px; height: 807px; box-sizing: border-box; flex: none; }
  .list { width: 51px; height: 54px; display: flex; align-items: center; justify-content: center; background: rgba(0, 0, 0, .12); border-radius: 3px; }
  .titles { margin: 1px 0 0 10px; }
  .titles .fit + .fit { margin-top: -2px; }
  .ghost { fill: rgba(255, 255, 255, .44); }
  .dim { fill: rgba(255, 255, 255, .38); }
  .dash { margin-left: auto; margin-top: 17px; }
  .caption { width: 1419px; height: 39px; margin: 24px auto 0; background: #000; display: flex; justify-content: center; flex: none; }
  .sub { font-family: "Liberation Sans", sans-serif; fill: #ffff18; overflow: visible; }
  .timeline { display: flex; align-items: center; height: 10px; margin-top: 24px; padding-left: 14px; flex: none; }
  .time { fill: #b8b8b8; font-weight: 700; margin: 3px 0 0 18px; }
  .time + .time { margin-left: 9px; }
  .controls { display: flex; align-items: center; height: 66px; padding: 0 22px; box-sizing: border-box; margin-top: -4px; }
  .play { margin-top: -2px; }
  .skip { margin: -2px 0 0 26px; }
  .skip.next { margin-left: 23px; }
  .num { fill: #777; font-weight: 600; }
  .rate { width: 42px; height: 25px; line-height: 25px; margin: -2px -9px 0 14px; background: #5b5b5b; border-radius: 3px; text-align: center; font-size: 14px; font-weight: 700; color: #0a0a0a; }
  .mid { display: flex; align-items: center; gap: 6px; height: 30px; margin: 3px 0 0 570px; }
  .mid.book { margin-left: 40px; gap: 8px; }
  .mid .fit, .continue .fit { margin-top: 2px; }
  .ghost2 { fill: #858585; }
  .continue { display: flex; align-items: center; gap: 13px; width: 127px; height: 31px; box-sizing: border-box; padding-left: 15px; background: rgba(33, 150, 38, .48); border-radius: 2px; margin: 2px 0 0 auto; }
  .right { display: flex; align-items: center; margin: 5px 0 0 18px; gap: 16px; }

  .taskbar { height: 40px; flex: none; display: flex; align-items: center; position: relative; padding-left: 8px; overflow: hidden; }
  .wall { position: absolute; left: 0; top: 0; }
  .orb { position: relative; margin-right: 14px; margin-top: 2px; }
  .task { width: 58px; height: 38px; display: flex; gap: 1px; margin-right: 4px; position: relative; }
  .face { flex: 1; box-sizing: border-box; border: 1px solid #c9bcb9; background: rgba(190, 178, 176, .38); display: flex; align-items: center; justify-content: center; box-shadow: 0 0 0 1px rgba(70, 50, 48, .45); }
  .on .face { background: rgba(225, 220, 220, .62); border-color: #fff; }
  .task i { width: 3px; box-sizing: border-box; border: 1px solid #c9bcb9; border-left: 0; background: rgba(190, 178, 176, .38); }
  .tray { margin-left: auto; display: flex; align-items: center; position: relative; gap: 8px; padding-right: 19px; }
  .tray svg:first-child { margin-right: 8px; }
  .eng { margin-left: 6px; }
  .clock { display: flex; flex-direction: column; align-items: center; margin: 3px 0 0 10px; }
  .clock .fit:first-child { margin-right: 0; }
  .tray .eng { margin-top: 2px; }
</style>
